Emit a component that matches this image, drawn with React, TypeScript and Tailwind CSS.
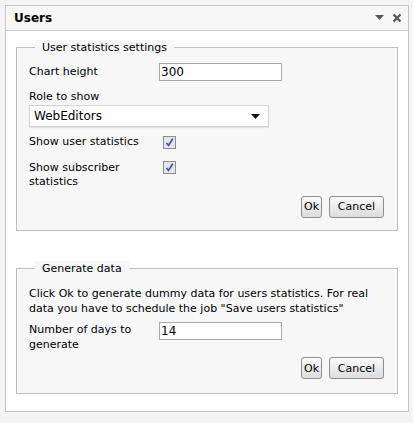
import React from "react";

const font = { fontFamily: '"DejaVu Sans", Verdana, sans-serif' };

function Check() {
  return (
    <span className="inline-flex h-[13px] w-[13px] items-center justify-center border border-[#8e8e8e] bg-[#e4e6ec]">
      <svg width="9" height="9" viewBox="0 0 9 9">
        <path d="M1.5 5 L3.5 7.5 L7.8 0.8" fill="none" stroke="#3a4fa6" strokeWidth="1.6" />
      </svg>
    </span>
  );
}

function Buttons() {
  return (
    <div className="flex justify-end gap-[7px] pr-[13px]">
      <button className="h-[22px] rounded-[3px] border border-[#8f8f8f] bg-gradient-to-b from-[#fbfbfb] to-[#dcdcdc] px-[2px] text-[11px] leading-none text-black">
        Ok
      </button>
      <button className="h-[22px] w-[55px] rounded-[3px] border border-[#8f8f8f] bg-gradient-to-b from-[#fbfbfb] to-[#dcdcdc] text-[11px] leading-none text-black">
        Cancel
      </button>
    </div>
  );
}

export default function App() {
  return (
    <div className="h-[423px] w-[413px] bg-[#f4f4f4] pl-[5px] pt-[5px] text-[11px] text-black" style={font}>
      <div className="flex h-[407px] w-[404px] flex-col border border-[#c4c4c4] bg-white">
        <div className="flex h-[25px] items-center justify-between border-b border-[#cfcfcf] bg-[#f6f6f6] pl-[8px] pr-[6px]">
          <span className="text-[12px] font-bold">Users</span>
          <div className="flex items-center gap-[8px] text-[#555]">
            <svg width="9" height="6" viewBox="0 0 9 6">
              <path d="M0 0 H9 L4.5 5 Z" fill="#555" />
            </svg>
            <svg width="10" height="10" viewBox="0 0 10 10">
              <path d="M1.5 1.5 L8.5 8.5 M8.5 1.5 L1.5 8.5" stroke="#555" strokeWidth="2.2" />
            </svg>
          </div>
        </div>

        <div className="flex flex-col px-[10px] pt-[9px]">
          <fieldset className="h-[191px] border border-[#bdbdbd] bg-[#f7f7f7] px-[12px]">
            <legend className="ml-[6px] bg-[#f7f7f7] px-[7px] text-[11px] leading-[15px]">User statistics settings</legend>
            <div className="-mx-[12px] flex flex-col pt-[8px]">
              <div className="flex items-center px-[12px]">
                <span className="w-[130px]">Chart height</span>
                <input
                  readOnly
                  value="300"
                  className="h-[18px] w-[123px] border border-[#a9a9a9] bg-white px-[1px] text-[12px] outline-none"
                  style={font}
                />
              </div>
              <div className="mt-[9px] px-[12px] leading-[14px]">Role to show</div>
              <div className="ml-[12px] mt-[1px] flex h-[22px] w-[240px] items-center justify-between border border-[#d4d4d4] bg-white pl-[4px] pr-[8px] shadow-[0_1px_1px_rgba(0,0,0,0.08)]">
                <span className="text-[12px]">WebEditors</span>
                <svg width="9" height="5" viewBox="0 0 9 5">
                  <path d="M0 0 H9 L4.5 5 Z" fill="#111" />
                </svg>
              </div>
              <div className="mt-[7px] flex items-center px-[12px]">
                <span className="w-[134px]">Show user statistics</span>
                <Check />
              </div>
              <div className="mt-[10px] flex items-start px-[12px]">
                <span className="w-[134px] leading-[14px]">
                  Show subscriber
                  <br />
                  statistics
                </span>
                <Check />
              </div>
              <div className="mt-[7px]">
                <Buttons />
              </div>
            </div>
          </fieldset>

          <fieldset className="mt-[30px] h-[133px] border border-[#bdbdbd] bg-[#f7f7f7] px-[12px]">
            <legend className="ml-[6px] bg-[#f7f7f7] px-[7px] text-[11px] leading-[15px]">Generate data</legend>
            <div className="-mx-[12px] flex flex-col pt-[10px]">
              <div className="px-[12px] leading-[15px]">
                Click Ok to generate dummy data for users statistics. For real data you have to schedule the job "Save users statistics"
              </div>
              <div className="mt-[6px] flex items-start px-[12px]">
                <span className="w-[130px] leading-[15px]">
                  Number of days to
                  <br />
                  generate
                </span>
                <input
                  readOnly
                  value="14"
                  className="h-[18px] w-[123px] border border-[#a9a9a9] bg-white px-[1px] text-[12px] outline-none"
                  style={font}
                />
              </div>
              <div className="mt-[5px]">
                <Buttons />
              </div>
            </div>
          </fieldset>
        </div>
      </div>
    </div>
  );
}
